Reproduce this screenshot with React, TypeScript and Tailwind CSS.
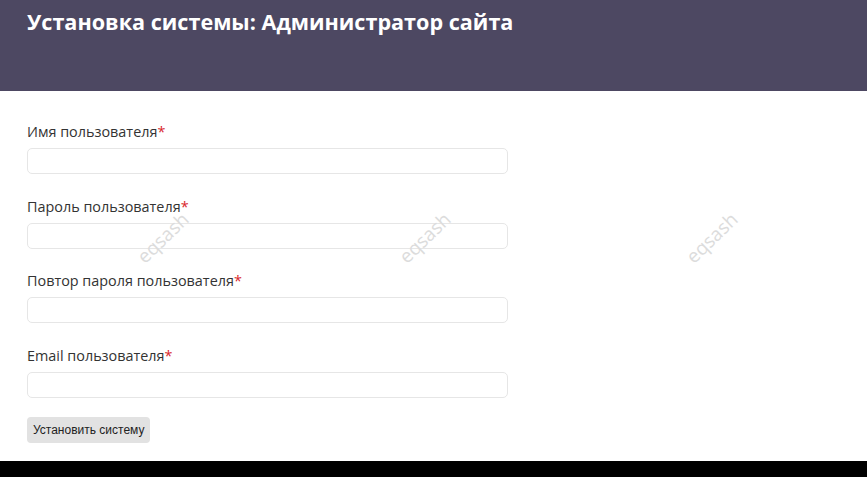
const fields = [
	'Имя пользователя',
	'Пароль пользователя',
	'Повтор пароля пользователя',
	'Email пользователя',
];

const marks = [
	{ left: 'left-[163px]', top: 'top-[238px]' },
	{ left: 'left-[425px]', top: 'top-[238px]' },
	{ left: 'left-[712px]', top: 'top-[238px]' },
];

export default function App() {
	return (
		<div className="relative min-h-[477px] bg-black font-['Open_Sans',sans-serif]">
			<header className="h-[91px] bg-[#4d4862] px-[27px] pt-[7px]">
				<h1 className="text-[21.6px] font-bold leading-[30px] text-white">
					Установка системы: Администратор сайта
				</h1>
			</header>

			<main className="bg-white px-[27px] pt-[31px] pb-[18px]">
				<form className="flex flex-col gap-[22.6px]">
					{fields.map((label) => (
						<div key={label} className="flex flex-col gap-[6px]">
							<label className="text-[14.4px] leading-[20px] text-[#333]">
								{label}
								<span className="text-[#d9262b]">*</span>
							</label>
							<input
								type="text"
								className="h-[26px] w-[481px] rounded-[5px] border border-[#e6e6e6] bg-white px-2 text-[14px] outline-none"
							/>
						</div>
					))}
				</form>
				<button
					type="button"
					className="mt-[19px] h-[26px] rounded-[4px] bg-[#e2e2e2] px-[6px] font-['Liberation_Sans',Arial,sans-serif] text-[12px] text-[#222]"
				>
					Установить систему
				</button>
			</main>

			{marks.map((m, i) => (
				<span
					key={i}
					className={`pointer-events-none absolute ${m.left} ${m.top} -translate-x-1/2 -translate-y-1/2 -rotate-[44deg] select-none text-[19px] leading-none text-[#dcdcdc]`}
				>
					eqsash
				</span>
			))}
		</div>
	);
}
